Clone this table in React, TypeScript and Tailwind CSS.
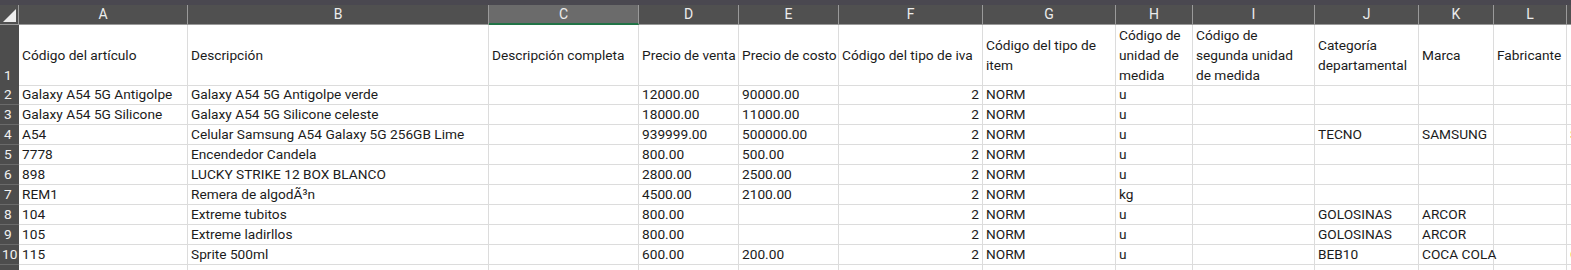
const cols = ["A", "B", "C", "D", "E", "F", "G", "H", "I", "J", "K", "L", "M"];

const grid =
  "grid grid-cols-[19px_169px_301px_150px_100px_100px_144px_133px_77px_122px_104px_75px_73px_80px]";

const headers: string[][] = [
  ["Código del artículo"],
  ["Descripción"],
  ["Descripción completa"],
  ["Precio de venta"],
  ["Precio de costo"],
  ["Código del tipo de iva"],
  ["Código del tipo de", "item"],
  ["Código de", "unidad de", "medida"],
  ["Código de", "segunda unidad", "de medida"],
  ["Categoría", "departamental"],
  ["Marca"],
  ["Fabricante"],
  [""],
];

const rows: string[][] = [
  ["Galaxy A54 5G Antigolpe", "Galaxy A54 5G Antigolpe verde", "", "12000.00", "90000.00", "2", "NORM", "u", "", "", "", "", ""],
  ["Galaxy A54 5G Silicone", "Galaxy A54 5G Silicone celeste", "", "18000.00", "11000.00", "2", "NORM", "u", "", "", "", "", ""],
  ["A54", "Celular Samsung A54 Galaxy 5G 256GB Lime", "", "939999.00", "500000.00", "2", "NORM", "u", "", "TECNO", "SAMSUNG", "", "S"],
  ["7778", "Encendedor Candela", "", "800.00", "500.00", "2", "NORM", "u", "", "", "", "", ""],
  ["898", "LUCKY STRIKE 12 BOX BLANCO", "", "2800.00", "2500.00", "2", "NORM", "u", "", "", "", "", ""],
  ["REM1", "Remera de algodÃ³n", "", "4500.00", "2100.00", "2", "NORM", "kg", "", "", "", "", ""],
  ["104", "Extreme tubitos", "", "800.00", "", "2", "NORM", "u", "", "GOLOSINAS", "ARCOR", "", ""],
  ["105", "Extreme ladirllos", "", "800.00", "", "2", "NORM", "u", "", "GOLOSINAS", "ARCOR", "", ""],
  ["115", "Sprite 500ml", "", "600.00", "200.00", "2", "NORM", "u", "", "BEB10", "COCA COLA", "", "C"],
  ["Galaxy A54 Ã", "Funda Galaxy A54 5G Ã", "", "", "", "2", "NORM", "u", "", "", "", "", ""],
];

export default function App() {
  return (
    <div className="h-[270px] w-[1571px] overflow-hidden bg-white font-['Roboto',sans-serif] text-[13.7px] text-[#1b1b1b]">
      <div className="h-[5px] bg-[#4a4850]" />

      {/* column letters */}
      <div className={`${grid} h-[20px] bg-[#505050] text-[14px] text-[#ececec]`}>
        <div className="relative border-r border-b border-[#9a9a9a]">
          <svg className="absolute bottom-[2px] right-[2px]" width="13" height="13" viewBox="0 0 13 13">
            <polygon points="13,0 13,13 0,13" fill="#ededed" />
          </svg>
        </div>
        {cols.map((c) =>
          c === "C" ? (
            <div
              key={c}
              className="flex items-center justify-center border-r border-[#9a9a9a] border-b-2 border-b-[#217346] bg-[#6b6b6b] leading-[18px]"
            >
              {c}
            </div>
          ) : (
            <div
              key={c}
              className="flex items-center justify-center border-r border-b border-[#9a9a9a] leading-[19px]"
            >
              {c}
            </div>
          )
        )}
      </div>

      {/* row 1: titles */}
      <div className={`${grid} h-[60px]`}>
        <div className="flex items-end border-b border-[#6a6a6a] bg-[#4d4d4d] pl-[4px] pb-[1px] leading-[18px] text-[#f2f2f2]">
          1
        </div>
        {headers.map((lines, i) => (
          <div
            key={i}
            className="flex flex-col justify-center overflow-visible whitespace-nowrap border-r border-b border-[#dcdcdc] pl-[3px] leading-[20px]"
          >
            {lines.map((l, j) => (
              <span key={j}>{l}</span>
            ))}
          </div>
        ))}
      </div>

      {/* data rows */}
      {rows.map((r, ri) => (
        <div key={ri} className={`${grid} h-[20px]`}>
          <div
            className={`border-b border-[#6a6a6a] bg-[#4d4d4d] leading-[19px] text-[#f2f2f2] ${
              ri + 2 >= 10 ? "pl-[2px]" : "pl-[4px]"
            }`}
          >
            {ri + 2}
          </div>
          {r.map((v, ci) => (
            <div
              key={ci}
              className={`overflow-visible whitespace-nowrap border-r border-b border-[#dcdcdc] leading-[19px] ${
                ci === 5 ? "pr-[3px] text-right" : "pl-[3px]"
              } ${ci === 12 ? "text-[#e59a2c]" : ""} ${ri === 9 ? "pt-[9px]" : ""}`}
            >
              {v}
            </div>
          ))}
        </div>
      ))}
    </div>
  );
}
